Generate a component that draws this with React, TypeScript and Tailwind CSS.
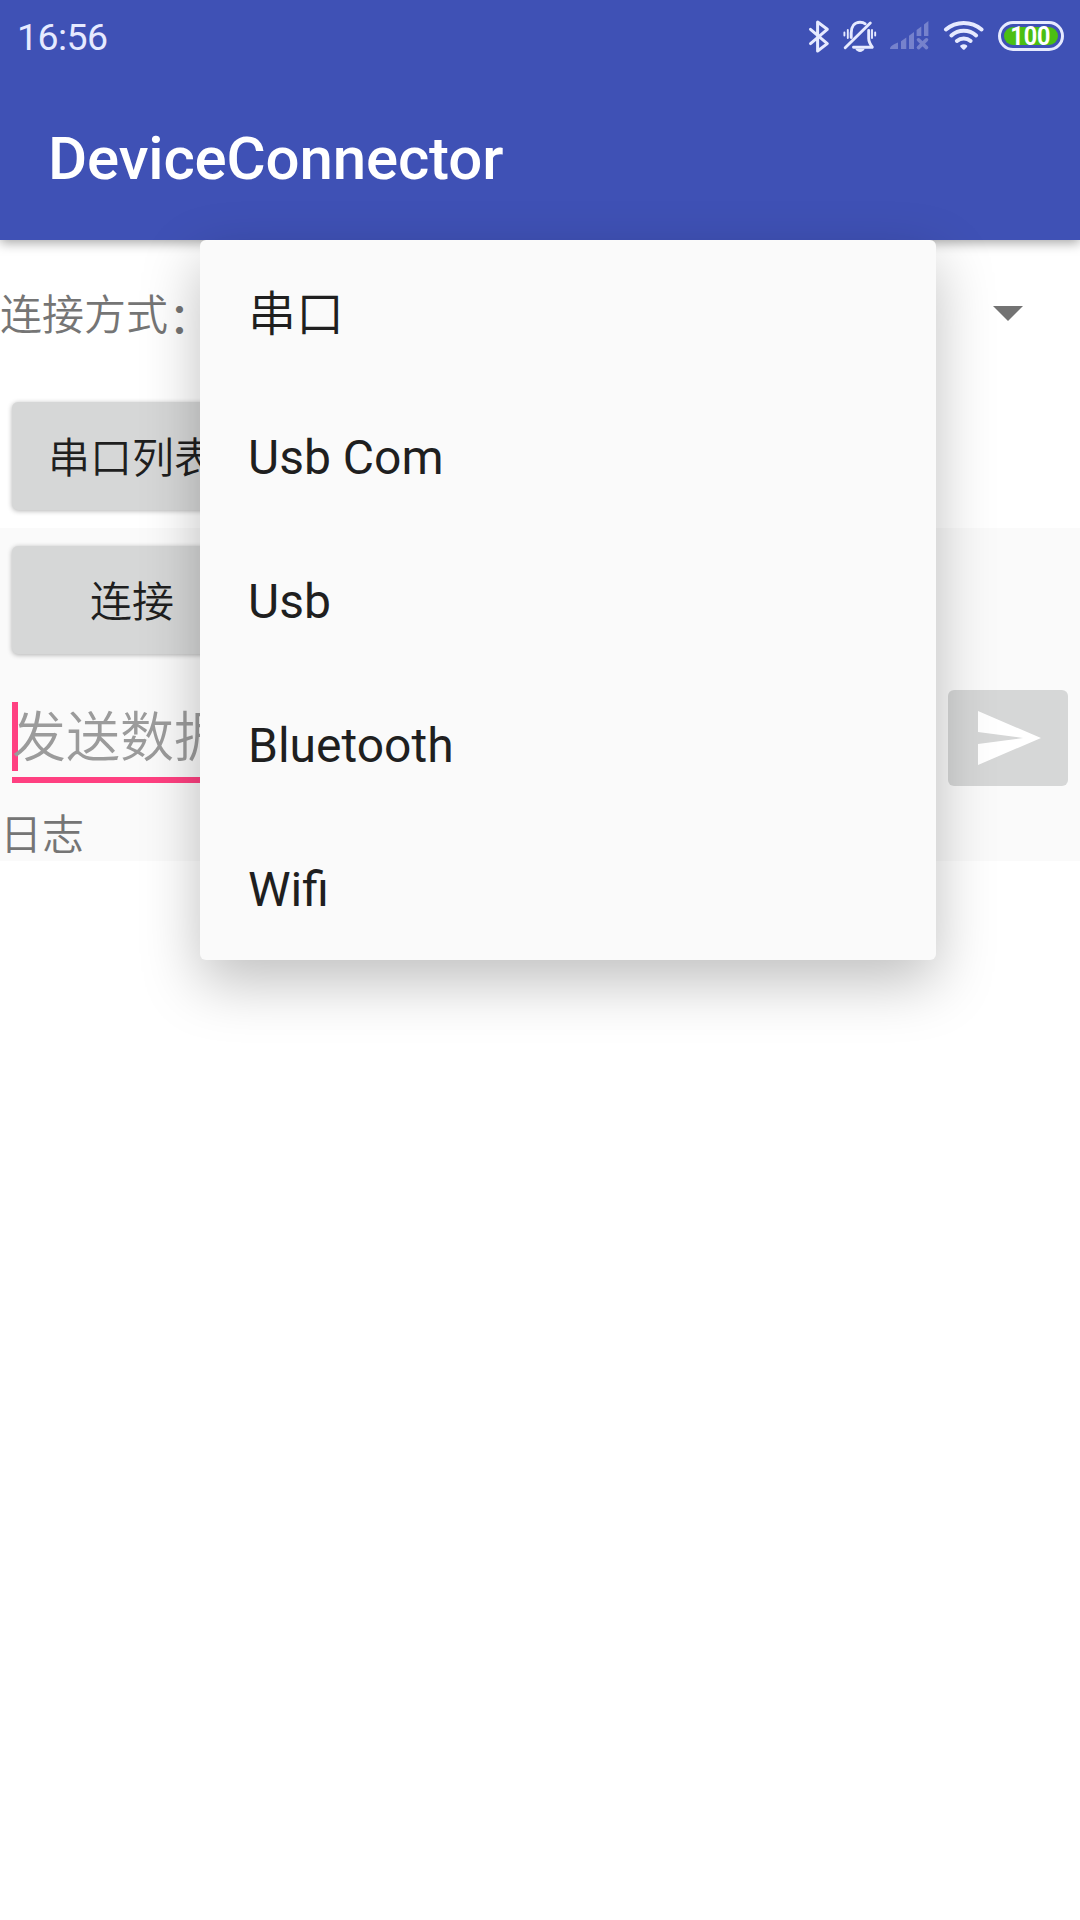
import React from "react";

const menuItems = ["串口", "Usb Com", "Usb", "Bluetooth", "Wifi"];

function BluetoothIcon() {
  return (
    <svg className="h-[36px] w-[24px]" viewBox="807 18 24 36" fill="none" stroke="#e6eaff" strokeWidth="3" strokeLinejoin="round" strokeLinecap="round">
      <path d="M810.5 29.3 L827.3 43.6 L817.6 51 V22 L827.3 29.3 L810.5 43.6" />
    </svg>
  );
}

function MutedBellIcon() {
  return (
    <svg className="h-[36px] w-[36px]" viewBox="842 18 36 36" fill="none" stroke="#e6eaff" strokeWidth="2.9" strokeLinecap="round" strokeLinejoin="round">
      <path d="M851.2 37.5 V33 C851.2 26.5 854.5 22.2 860 22.2 C862.6 22.2 864 22.8 865.2 23.8" />
      <path d="M868.7 30.5 V38.5 C868.7 42 870 44 872.3 47.2 H853.5" />
      <path d="M870.3 23 L845.2 47.8" />
      <path d="M847.8 30 V38 M844.4 32.5 V35.5 M872 30 V38 M875.2 32.5 V35.5" strokeWidth="1.9" />
      <path d="M855.3 48.8 H864.7 C863 53 857 53 855.3 48.8 Z" fill="#e6eaff" stroke="none" />
    </svg>
  );
}

function NoSignalIcon() {
  return (
    <svg className="h-[36px] w-[42px]" viewBox="888 18 42 36" fill="#7682cc">
      <path d="M890 49 C890 46 893 44.5 898 42.5 V49 Z" />
      <path d="M901 41.2 L906.3 37.6 V49 H901 Z" />
      <path d="M909 35.8 L914 32 V49 H909 Z" />
      <path d="M916.6 30 L921.3 26.5 V36 H916.6 Z" />
      <path d="M924 24.5 L928.4 21 V36 H924 Z" />
      <path d="M918.5 39.8 L926.5 47.6 M926.5 39.8 L918.5 47.6" stroke="#7682cc" strokeWidth="3.6" strokeLinecap="round" />
    </svg>
  );
}

function WifiIcon() {
  return (
    <svg className="h-[36px] w-[44px]" viewBox="942 18 44 36" fill="none" stroke="#e6eaff" strokeWidth="4" strokeLinecap="round">
      <path d="M945.9 29.4 C956 20.7 971.5 20.7 981.6 29.4" />
      <path d="M951.4 35.4 C958.5 29.2 969 29.2 976.1 35.4" />
      <path d="M956.9 41 C960.8 37.6 966.7 37.6 970.6 41" />
      <path d="M961.4 46.2 C962.6 45.4 964.9 45.4 966.1 46.2 L963.8 48.6 Z" fill="#e6eaff" strokeWidth="2.4" strokeLinejoin="round" />
    </svg>
  );
}

function Battery() {
  return (
    <div className="flex h-[30px] w-[66px] items-center justify-center rounded-full border-[3px] border-[#e6eaff] p-[3px]">
      <div className="flex h-[18px] w-full items-center justify-center rounded-full bg-[#4bbf12] pr-0.5 text-[26px] leading-none font-bold text-white">
        <span className="inline-block scale-x-[0.9]">100</span>
      </div>
    </div>
  );
}

function RaisedButton({ children }: { children: React.ReactNode }) {
  return (
    <button className="mx-3 my-[18px] flex h-[108px] w-[240px] items-center justify-center rounded-[6px] bg-[#d6d7d7] pt-[5px] text-[42px] leading-none font-[350] text-[#1f1f1f] shadow-[0_1px_5px_rgba(0,0,0,0.3)]">
      {children}
    </button>
  );
}

export default function App() {
  return (
    <div className="relative flex h-[1920px] w-[1080px] flex-col overflow-hidden bg-white font-['Roboto','Noto_Sans_CJK_SC',sans-serif]">
      <header className="relative h-[240px] shrink-0 bg-[#3f51b5] shadow-[0_3px_11px_rgba(0,0,0,0.35)]">
        <div className="flex h-[72px] items-center justify-between pr-4 pl-[17px]">
          <span className="pt-1 text-[37.5px] leading-none tracking-[-0.6px] text-[#e6eaff]">16:56</span>
          <div className="flex items-center">
            <BluetoothIcon />
            <div className="ml-[11px] flex"><MutedBellIcon /></div>
            <div className="ml-[10px] flex"><NoSignalIcon /></div>
            <div className="ml-3 flex"><WifiIcon /></div>
            <div className="ml-3 flex"><Battery /></div>
          </div>
        </div>
        <h1 className="flex h-[168px] items-center pt-[5px] pl-12 text-[60px] leading-none font-medium tracking-[-0.15px] text-white">DeviceConnector</h1>
      </header>

      <main className="flex flex-col">
        <div className="flex h-[144px] items-center justify-between pr-[57px]">
          <span className="flex pt-[11px] text-[42px] leading-none font-[350] whitespace-nowrap text-[#757575]">
            连接方式<span className="ml-px pt-[3px] font-medium">：</span>
          </span>
          <svg className="mt-[3px] h-[15px] w-[30px]" viewBox="0 0 30 15" fill="#737373">
            <path d="M0 0 H30 L15 15 Z" />
          </svg>
        </div>
        <div className="flex h-[144px]">
          <RaisedButton>串口列表</RaisedButton>
        </div>
        <section className="flex h-[333px] flex-col bg-[#fafafa]">
          <div className="flex h-[144px]">
            <RaisedButton>连接</RaisedButton>
          </div>
          <div className="flex h-[132px] items-start px-3">
            <div className="mr-3 flex h-[111px] flex-1 items-end border-b-[6px] border-[#ff4081] pb-1.5">
              <div className="flex h-[69px] items-center">
                <span className="h-[69px] w-[6px] shrink-0 bg-[#ff4081]" />
                <span className="-ml-[6px] pt-[5px] text-[54px] leading-none font-[350] text-[#9b9b9b]">发送数据</span>
              </div>
            </div>
            <button className="mt-[18px] flex h-24 w-[120px] items-center rounded-[6px] bg-[#d6d7d7] pl-[30px]">
              <svg className="h-[54px] w-[63px]" viewBox="0 0 63 54" fill="#ffffff">
                <path d="M0 0 L63 27 L0 54 V33 L45 27 L0 21 Z" />
              </svg>
            </button>
          </div>
          <div className="flex h-[57px] items-center pt-[6px] text-[42px] leading-none font-[350] text-[#757575]">日志</div>
        </section>
      </main>

      <ul className="absolute top-[240px] left-[200px] w-[736px] rounded-[6px] bg-[#fafafa] shadow-[0_22px_58px_rgba(0,0,0,0.25)]">
        {menuItems.map((item) => (
          <li key={item} className="flex h-36 items-center pt-[3px] pl-12 text-[48px] leading-none font-normal text-[#1f1f1f] first:pt-[5px] first:font-[350]">
            {item}
          </li>
        ))}
      </ul>
    </div>
  );
}
